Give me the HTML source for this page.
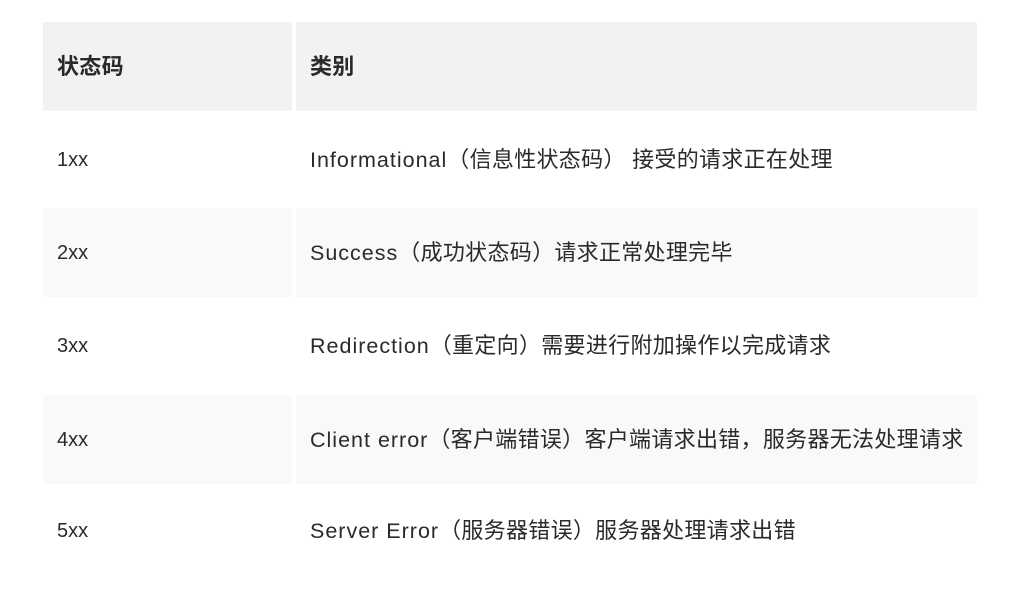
<!DOCTYPE html>
<html><head><meta charset="utf-8"><style>
body{margin:0;background:#fff;width:1016px;height:590px;overflow:hidden;font-family:"Liberation Sans","Noto Sans CJK SC",sans-serif;color:#2a2a2a;font-size:20px}
.r{position:absolute;left:43px;width:934px;}
.c{position:absolute;top:0;bottom:0;display:flex;align-items:center;line-height:24px}
.a{left:0;width:249px;padding-left:14px}
.b{left:253px;width:681px;padding-left:14px;white-space:nowrap;font-size:21.5px;letter-spacing:1px}
.h .c{background:#f2f2f2;font-weight:bold}
.e .c{background:#f9f9f9}
i{font-style:normal;font-size:22px;letter-spacing:0.3px}
</style></head><body>
<div class="r h" style="top:22px;height:89px"><div class="c a" style="width:235px"><i>状态码</i></div><div class="c b" style="width:667px"><i>类别</i></div></div>
<div class="r" style="top:111px;height:97px"><div class="c a">1xx</div><div class="c b">Informational<i>（信息性状态码） 接受的请求正在处理</i></div></div>
<div class="r e" style="top:208px;height:89px"><div class="c a" style="width:235px">2xx</div><div class="c b" style="width:667px">Success<i>（成功状态码）请求正常处理完毕</i></div></div>
<div class="r" style="top:297px;height:98px"><div class="c a">3xx</div><div class="c b">Redirection<i>（重定向）需要进行附加操作以完成请求</i></div></div>
<div class="r e" style="top:395px;height:89px"><div class="c a" style="width:235px">4xx</div><div class="c b" style="width:667px">Client error<i>（客户端错误）客户端请求出错，服务器无法处理请求</i></div></div>
<div class="r" style="top:484px;height:94px"><div class="c a">5xx</div><div class="c b">Server Error<i>（服务器错误）服务器处理请求出错</i></div></div>
</body></html>
